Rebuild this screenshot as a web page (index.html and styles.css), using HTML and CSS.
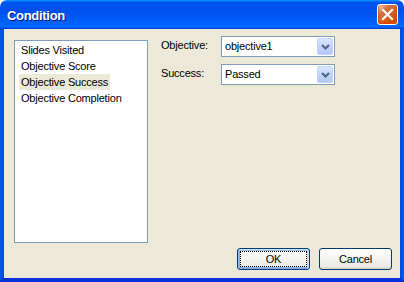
FILE: index.html
```html
<!DOCTYPE html>
<html lang="en">
<head>
  <meta charset="UTF-8">
  <meta name="viewport" content="width=device-width, initial-scale=1.0">
  <title>Condition</title>
  <link rel="stylesheet" href="styles.css">
</head>
<body>
  <div class="window">
    <div class="title-bar">
      <span class="title">Condition</span>
      <div class="close-btn">
        <svg width="13" height="13" viewBox="0 0 13 13">
          <path d="M2 2 L11 11 M11 2 L2 11" stroke="#fff" stroke-width="2.2" stroke-linecap="square"/>
        </svg>
      </div>
    </div>

    <div class="body">
      <div class="main">
        <ul class="listbox">
          <li><span>Slides Visited</span></li>
          <li><span>Objective Score</span></li>
          <li class="selected"><span>Objective Success</span></li>
          <li><span>Objective Completion</span></li>
        </ul>

        <div class="form">
          <div class="row">
            <label>Objective:</label>
            <div class="combo">
              <span class="combo-text">objective1</span>
              <span class="drop">
                <svg width="9" height="6" viewBox="0 0 9 6">
                  <path d="M1 1 L4.5 4.5 L8 1" fill="none" stroke="#4d6185" stroke-width="2"/>
                </svg>
              </span>
            </div>
          </div>
          <div class="row">
            <label>Success:</label>
            <div class="combo">
              <span class="combo-text">Passed</span>
              <span class="drop">
                <svg width="9" height="6" viewBox="0 0 9 6">
                  <path d="M1 1 L4.5 4.5 L8 1" fill="none" stroke="#4d6185" stroke-width="2"/>
                </svg>
              </span>
            </div>
          </div>
        </div>
      </div>

      <div class="buttons">
        <div class="btn default"><span class="focus">OK</span></div>
        <div class="btn">Cancel</div>
      </div>
    </div>
  </div>
</body>
</html>
```

FILE: styles.css
```css
* {
  margin: 0;
  padding: 0;
  box-sizing: border-box;
}

body {
  width: 404px;
  height: 282px;
  overflow: hidden;
  background: #fff;
  font-family: "Liberation Sans", Arial, sans-serif;
  font-size: 11px;
  letter-spacing: -0.2px;
  color: #000;
}

.window {
  width: 404px;
  height: 282px;
  display: flex;
  flex-direction: column;
}

/* title bar */
.title-bar {
  height: 29px;
  flex: none;
  display: flex;
  align-items: center;
  justify-content: space-between;
  padding: 0 6px 0 7px;
  border-radius: 7px 7px 0 0;
  background: linear-gradient(180deg, #0997ff, #0053ee 8%, #0050ee 40%, #06f 88%, #06f 93%, #005bff 95%, #003dd7 96%, #003dd7);
}

.title {
  color: #fff;
  font-weight: bold;
  font-size: 13px;
  letter-spacing: -0.3px;
  text-shadow: 1px 1px #0f1089;
  padding-top: 1px;
}

.close-btn {
  width: 21px;
  height: 21px;
  border: 1px solid #fff;
  border-radius: 3px;
  background: radial-gradient(circle at 90% 90%, #cc4600, #dc6527 55%, #cd7546 70%, #ffccb2 90%, #fff);
  box-shadow: inset 0 -1px 2px 1px #da4600;
  display: flex;
  align-items: center;
  justify-content: center;
}

/* dialog body */
.body {
  flex: 1;
  display: flex;
  flex-direction: column;
  background: #ece9d8;
  border-left: 3px solid #0055ea;
  border-right: 3px solid #0055ea;
  border-bottom: 4px solid #0831d9;
  box-shadow: inset 1px 0 #0048e0, inset -1px 0 #0048e0;
  padding: 7px 9px 8px 11px;
}

.main {
  display: flex;
  flex: 1;
}

.listbox {
  list-style: none;
  width: 134px;
  height: 203px;
  margin-top: 4px;
  border: 1px solid #7f9db9;
  background: #fff;
  padding: 1px 4px;
}

.listbox li {
  height: 16px;
  line-height: 16px;
}

.listbox li span {
  display: inline-block;
  padding: 0 2px;
}

.listbox li.selected span {
  background: #ece9d8;
}

.form {
  margin-left: 13px;
  display: flex;
  flex-direction: column;
  gap: 7px;
}

.row {
  display: flex;
  align-items: flex-start;
}

.row label {
  width: 60px;
  line-height: 16px;
  padding-top: 1px;
}

.combo {
  width: 114px;
  height: 21px;
  border: 1px solid #7f9db9;
  background: #fff;
  display: flex;
  justify-content: space-between;
  padding: 0 1px 0 3px;
}

.combo-text {
  line-height: 19px;
}

.drop {
  width: 16px;
  height: 17px;
  margin-top: 1px;
  border: 1px solid #c3d3fd;
  border-radius: 2px;
  background: linear-gradient(180deg, #dae6fe, #c3d3fb 50%, #b3c8f6);
  display: flex;
  align-items: center;
  justify-content: center;
}

/* buttons */
.buttons {
  display: flex;
  justify-content: flex-end;
  gap: 9px;
  margin-top: 5px;
}

.btn {
  width: 73px;
  height: 22px;
  border: 1px solid #003c74;
  border-radius: 3px;
  background: linear-gradient(180deg, #fff, #ecebe6 86%, #d6d0c5);
  display: flex;
  align-items: center;
  justify-content: center;
  line-height: 14px;
}

.btn.default {
  box-shadow: inset -1px 1px #cee7ff, inset 1px 2px #98b8ea, inset -2px 2px #bcd4f6, inset 1px -1px #89ade4, inset 2px -2px #89ade4;
  padding: 2px;
}

.btn .focus {
  display: flex;
  align-items: center;
  justify-content: center;
  width: 100%;
  height: 100%;
  border: 1px dotted #000;
}
```
